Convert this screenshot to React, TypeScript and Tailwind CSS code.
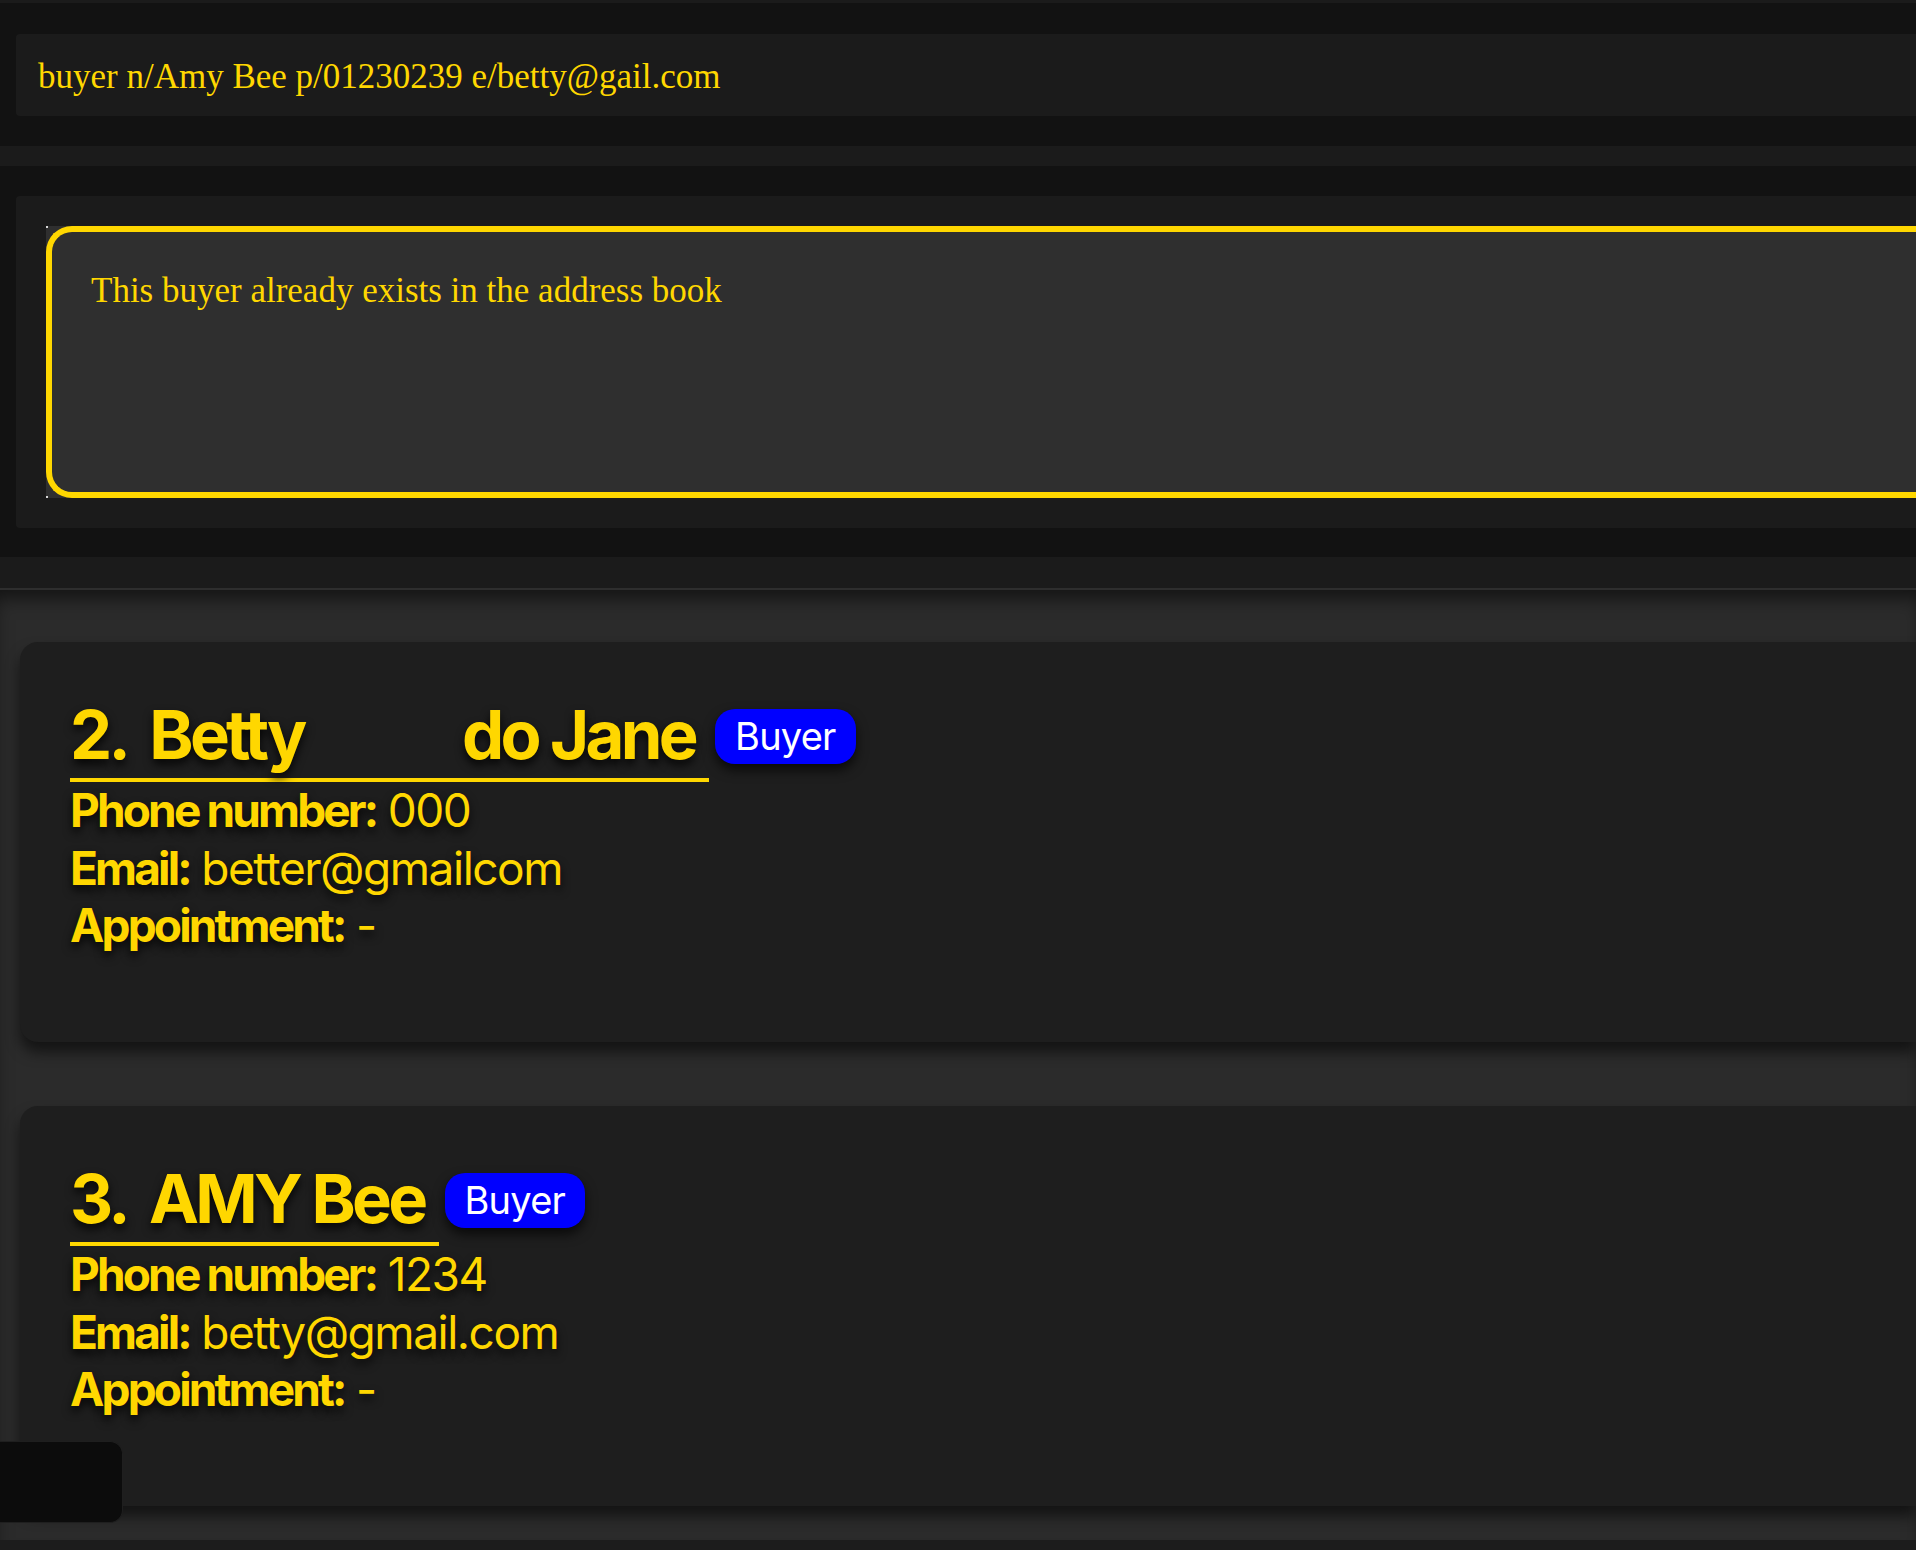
const buyers = [
  { index: 2, name: "Betty             do Jane", phone: "000", email: "better@gmailcom", appointment: "-", tag: "Buyer" },
  { index: 3, name: "AMY Bee", phone: "1234", email: "betty@gmail.com", appointment: "-", tag: "Buyer" },
]

const serif = "font-['Liberation_Serif',Georgia,serif]"
const sans = "font-['Inter','Liberation_Sans',sans-serif]"
const glow = "[text-shadow:0_5px_10px_rgba(0,0,0,0.85)]"

function BuyerCard({ buyer }: { buyer: (typeof buyers)[number] }) {
  return (
    <div className="h-[400px] ml-[20px] rounded-l-[18px] bg-[#1e1e1e] pl-[50px] pt-[52px] shadow-[0_10px_14px_rgba(0,0,0,0.55)]">
      <div className="flex items-center">
        <div
          className={`border-b-4 border-[#ffd700] pr-[14px] pb-[2px] text-[67px] font-bold leading-[82px] tracking-[-0.055em] text-[#ffd700] whitespace-pre ${glow}`}
        >
          <span className="mr-[22px]">{buyer.index}.</span>
          {buyer.name}
        </div>
        <span className="ml-[6px] mb-[4px] rounded-[20px] bg-[#0000ff] px-[20px] text-[38px] leading-[55px] tracking-[-0.02em] text-white shadow-[0_6px_12px_rgba(0,0,0,0.7)]">
          {buyer.tag}
        </span>
      </div>
      <div className={`text-[46px] leading-[57.5px] tracking-[-0.032em] text-[#ffd700] ${glow}`}>
        <div>
          <span className="font-bold tracking-[-0.062em]">Phone number:</span> {buyer.phone}
        </div>
        <div>
          <span className="font-bold tracking-[-0.062em]">Email:</span> {buyer.email}
        </div>
        <div>
          <span className="font-bold tracking-[-0.062em]">Appointment:</span> {buyer.appointment}
        </div>
      </div>
    </div>
  )
}

export default function App() {
  return (
    <div className={`relative h-[1550px] overflow-hidden bg-[#121212] ${sans}`}>
      <div className="h-[3px] bg-[#1b1b1b]" />

      <div className="pl-[16px] pt-[31px] pb-[30px]">
        <div className={`flex h-[82px] items-center rounded-l-[4px] bg-[#1b1b1b] pl-[22px] pt-[4px] text-[35px] text-[#ffd700] ${serif}`}>
          buyer n/Amy Bee p/01230239 e/betty@gail.com
        </div>
      </div>

      <div className="h-[20px] bg-[#1b1b1b]" />

      <div className="pl-[16px] pt-[30px] pb-[29px]">
        <div className="h-[332px] rounded-l-[4px] bg-[#1b1b1b] pl-[30px] pt-[30px]">
          <div className="relative h-[272px] bg-[#2f2f2f]">
            <span className="absolute left-0 top-0 h-[2px] w-[2px] bg-[#d8d8d8]" />
            <span className="absolute bottom-0 left-0 h-[2px] w-[2px] bg-[#d8d8d8]" />
            <div className={`relative h-full rounded-l-[26px] border-[6px] border-r-0 border-[#ffd700] pl-[39px] pt-[39px] text-[35px] leading-[40px] text-[#ffd700] ${serif}`}>
              This buyer already exists in the address book
            </div>
          </div>
        </div>
      </div>

      <div className="h-[31px] bg-[#1b1b1b]" />
      <div className="h-[2px] bg-[#2e2e2e]" />

      <div className="flex h-[950px] flex-col gap-[64px] bg-[#2b2b2b] pt-[52px] shadow-[inset_0_14px_18px_-6px_rgba(0,0,0,0.55)]">
        {buyers.map((b) => (
          <BuyerCard key={b.index} buyer={b} />
        ))}
      </div>

      <div className="h-[10px] bg-[#1c1c1c]" />

      <div className="absolute left-0 top-[1441px] h-[82px] w-[123px] rounded-r-[13px] border border-l-0 border-[#1f1f1f] bg-[#0c0c0c]" />
    </div>
  )
}
